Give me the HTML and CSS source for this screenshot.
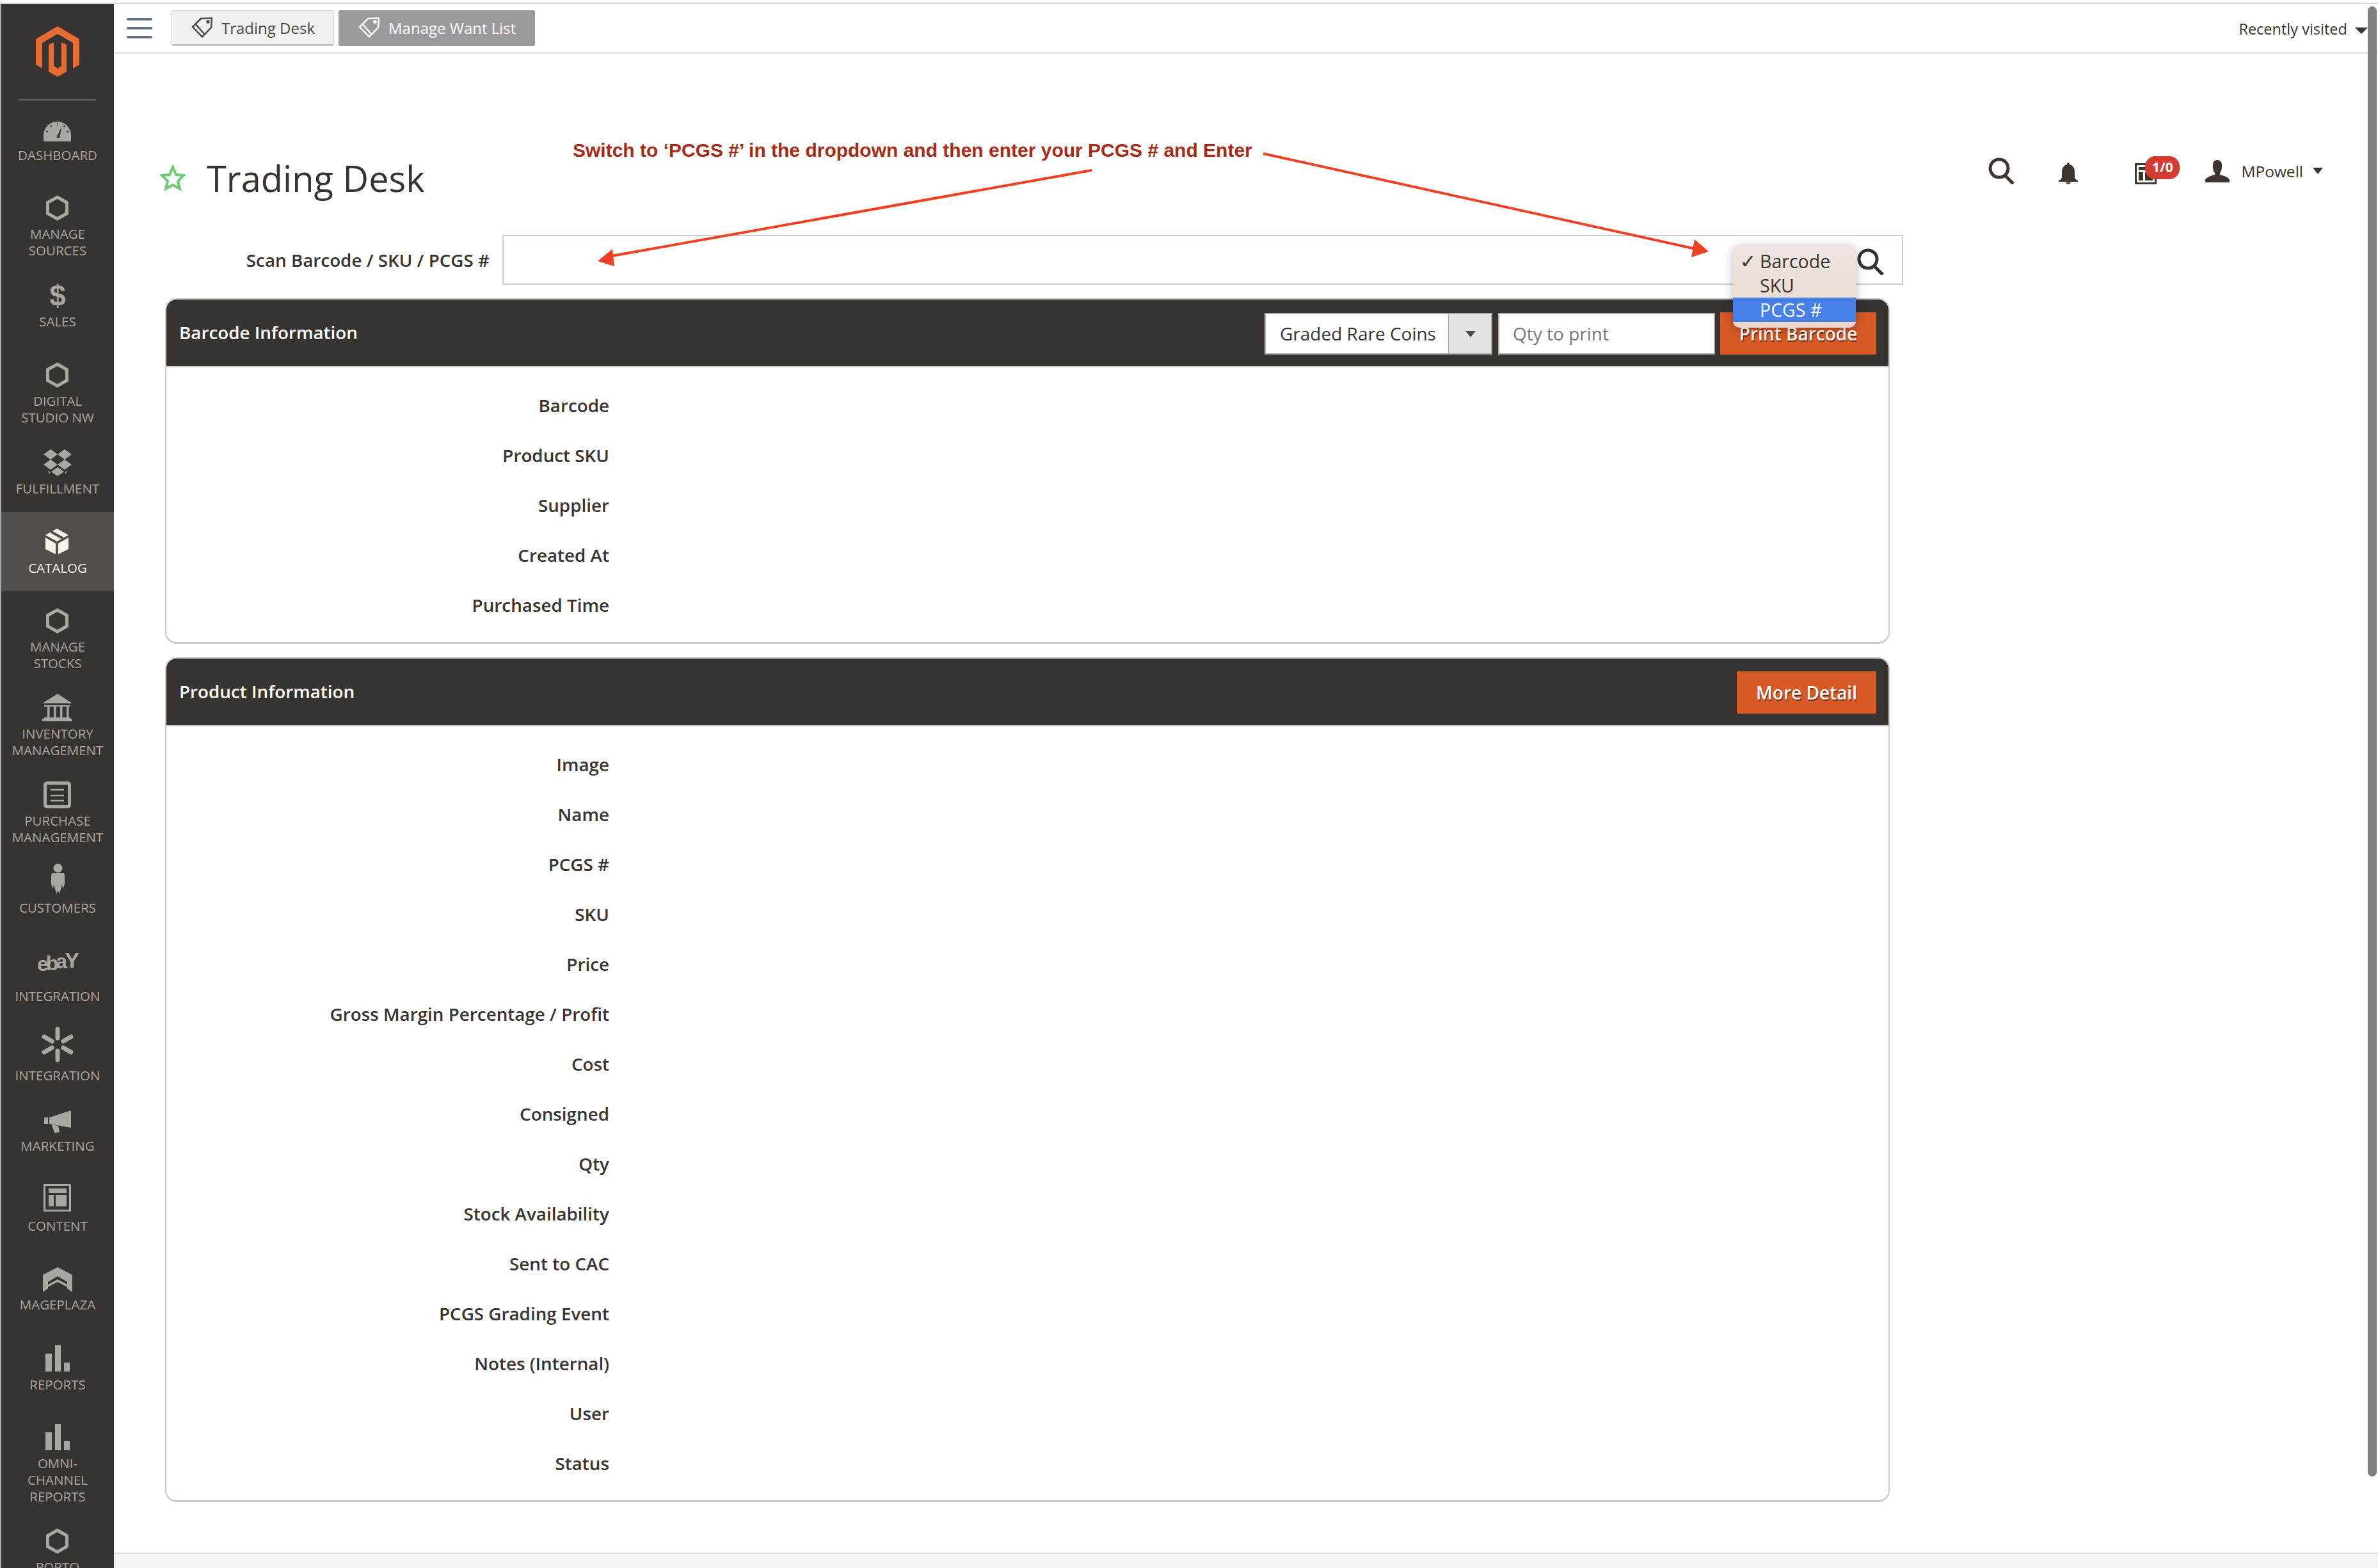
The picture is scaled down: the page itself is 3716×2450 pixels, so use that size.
FILE: index.html
```html
<!DOCTYPE html>
<html lang="en">
<head>
    <meta charset="UTF-8">
    <meta name="viewport" content="width=device-width, initial-scale=1.0">
    <title>Trading Desk</title>
    <link rel="stylesheet" href="styles.css">
</head>
<body>
    <div class="shell">
        <nav class="sidebar">
            <div class="logo-wrap">
                <svg class="logo" width="68" height="79" viewBox="0 0 68 79">
                    <path d="M34 0L68 20V60L58 66V26L34 12L10 26V66L0 60V20Z"/>
                    <path d="M34 79L20 71V29L28 25V62L34 66L40 62V25L48 29V71Z"/>
                </svg>
            </div>

            <a class="menu-item h122">
                <svg class="menu-icon" viewBox="0 0 70 60">
                    <path d="M13 58V48A21.5 21 0 0 1 56 48V58Z"/>
                    <path class="cut" d="M33 52L41 36L38 53Z"/>
                    <path class="cut-line" d="M35 30v3M24 33l1.500 2.500M46 33l-1.500 2.500M17 42l2.500 1M52 42l-2.500 1"/>
                </svg>
                <span class="menu-label">Dashboard</span>
            </a>
            <a class="menu-item h149">
                <svg class="menu-icon" viewBox="0 0 70 60"><polygon class="hex" points="34.500,22 49.500,30.500 49.500,47.500 34.500,56 19.500,47.500 19.500,30.500"/></svg>
                <span class="menu-label">Manage<br>Sources</span>
            </a>
            <a class="menu-item h111">
                <svg class="menu-icon" viewBox="0 0 70 60"><text class="icon-dollar" x="35" y="55">$</text></svg>
                <span class="menu-label">Sales</span>
            </a>
            <a class="menu-item h150">
                <svg class="menu-icon" viewBox="0 0 70 60"><polygon class="hex" points="34.500,22 49.500,30.500 49.500,47.500 34.500,56 19.500,47.500 19.500,30.500"/></svg>
                <span class="menu-label">Digital<br>Studio NW</span>
            </a>
            <a class="menu-item h111">
                <svg class="menu-icon" viewBox="0 0 70 60">
                    <path d="M24 18L35 26L24 34L13 26ZM46 18L57 26L46 34L35 26ZM24 34L35 42L24 50L13 42ZM46 34L57 42L46 50L35 42ZM35 46L45 53L35 60L25 53Z"/>
                    <path d="M19 51L24 54.500L22 56ZM51 51L46 54.500L48 56Z"/>
                </svg>
                <span class="menu-label">Fulfillment</span>
            </a>
            <a class="menu-item h124 active">
                <svg class="menu-icon" viewBox="0 0 70 60">
                    <path d="M34 18L52 28L34 38L16 28Z"/>
                    <path d="M16 32L32 41V58L16 50ZM36 41L52 32V50L36 58Z"/>
                    <path class="cut-line wide" d="M25 23L43 33"/>
                </svg>
                <span class="menu-label">Catalog</span>
            </a>
            <a class="menu-item h149">
                <svg class="menu-icon" viewBox="0 0 70 60"><polygon class="hex" points="34.500,22 49.500,30.500 49.500,47.500 34.500,56 19.500,47.500 19.500,30.500"/></svg>
                <span class="menu-label">Manage<br>Stocks</span>
            </a>
            <a class="menu-item h136">
                <svg class="menu-icon" viewBox="0 0 70 60">
                    <path d="M35 17L58 32H11Z"/>
                    <path d="M14 35H55V37H14ZM11 56H58V60H11ZM19 37h3.500V54H19ZM29 37h3.500V54H29ZM39 37h3.500V54H39ZM49 37h3.500V54H49ZM14 54H55V56H14Z"/>
                </svg>
                <span class="menu-label">Inventory<br>Management</span>
            </a>
            <a class="menu-item h136">
                <svg class="menu-icon" viewBox="0 0 70 60">
                    <rect class="hex" x="15.500" y="20.500" width="38" height="37" rx="3"/>
                    <path class="line" d="M24 31H45M24 40H45M24 48H45"/>
                </svg>
                <span class="menu-label">Purchase<br>Management</span>
            </a>
            <a class="menu-item h110">
                <svg class="menu-icon" viewBox="0 0 70 60">
                    <circle cx="35.500" cy="17.500" r="7"/>
                    <path d="M28 25H43Q46 25 46 30V43L43 50L42 42L38 58L35.500 52L33 58L29 42L28 50L25 43V30Q25 25 28 25Z"/>
                </svg>
                <span class="menu-label">Customers</span>
            </a>
            <a class="menu-item h138">
                <svg class="menu-icon" viewBox="0 0 70 60">
                    <text class="icon-ebay" x="3" y="40">e<tspan dy="-1">b</tspan><tspan dy="-3">a</tspan><tspan class="icon-ebay-y" dy="-1">Y</tspan></text>
                </svg>
                <span class="menu-label">Integration</span>
            </a>
            <a class="menu-item h124">
                <svg class="menu-icon" viewBox="0 0 70 60">
                    <path class="petal" d="M35 7V21M35 41V55M43.700 26L55.800 19M26.300 26L14.200 19M43.700 36L55.800 43M26.300 36L14.200 43"/>
                </svg>
                <span class="menu-label">Integration</span>
            </a>
            <a class="menu-item h110">
                <svg class="menu-icon" viewBox="0 0 70 60">
                    <path d="M14 35H20V45H14ZM22 35L56 24V51L22 45ZM26 46L36 48L38 58L30 59Z"/>
                </svg>
                <span class="menu-label">Marketing</span>
            </a>
            <a class="menu-item h125">
                <svg class="menu-icon" viewBox="0 0 70 60">
                    <rect class="hex thin" x="14.500" y="15.500" width="40" height="40"/>
                    <path d="M21 21H49V28H21ZM21 31H29V49H21ZM32 31H49V49H32Z"/>
                </svg>
                <span class="menu-label">Content</span>
            </a>
            <a class="menu-item h123">
                <svg class="menu-icon" viewBox="0 0 70 60">
                    <path d="M35 21L58 33V60L50 54V44L35 35L20 44V54L12 60V33Z"/>
                    <path d="M35 40L50 48V52L35 44L20 52V48Z"/>
                </svg>
                <span class="menu-label">Mageplaza</span>
            </a>
            <a class="menu-item h125">
                <svg class="menu-icon" viewBox="0 0 70 60"><path d="M16 31H26V59H16ZM31 18H40V59H31ZM45 45H54V59H45Z"/></svg>
                <span class="menu-label">Reports</span>
            </a>
            <a class="menu-item h175">
                <svg class="menu-icon" viewBox="0 0 70 60"><path d="M16 31H26V59H16ZM31 18H40V59H31ZM45 45H54V59H45Z"/></svg>
                <span class="menu-label">Omni-<br>Channel<br>Reports</span>
            </a>
            <a class="menu-item h110">
                <svg class="menu-icon" viewBox="0 0 70 60"><polygon class="hex" points="34.500,22 49.500,30.500 49.500,47.500 34.500,56 19.500,47.500 19.500,30.500"/></svg>
                <span class="menu-label">Porto</span>
            </a>
        </nav>

        <div class="main">
            <header class="topbar">
                <div class="hamburger"><span></span><span></span><span></span></div>
                <a class="tab">
                    <svg class="tag" width="33" height="32" viewBox="0 0 33 32">
                        <path d="M15 2L32 1.500L31 16L17 30.500L2 15ZM7 11L20 26"/>
                        <circle cx="26" cy="7" r="1.500"/>
                    </svg>
                    Trading Desk
                </a>
                <a class="tab tab-dark">
                    <svg class="tag" width="33" height="32" viewBox="0 0 33 32">
                        <path d="M15 2L32 1.500L31 16L17 30.500L2 15ZM7 11L20 26"/>
                        <circle cx="26" cy="7" r="1.500"/>
                    </svg>
                    Manage Want List
                </a>
                <div class="recent">Recently visited <span class="caret"></span></div>
            </header>

            <div class="content">
                <div class="page-head">
                    <svg class="star" width="40" height="40" viewBox="0 0 40 40">
                        <path d="M20 3L25 15L37 16L28 25L31 37L20 31L9 37L12 25L3 16L15 15Z"/>
                    </svg>
                    <h1>Trading Desk</h1>
                    <div class="actions">
                        <svg class="act-search" width="42" height="42" viewBox="0 0 42 42">
                            <circle cx="17" cy="17" r="14"/>
                            <path d="M26 28L39 41"/>
                        </svg>
                        <svg class="act-bell" width="30" height="34" viewBox="0 0 30 34">
                            <path d="M15 0Q17 0 17 3Q25 5 25 15V23Q26 27 30 28V30H0V28Q4 27 5 23V15Q5 5 13 3Q13 0 15 0Z"/>
                            <path d="M11 31H19Q18 34 15 34Q12 34 11 31Z"/>
                        </svg>
                        <div class="act-notify">
                            <svg width="34" height="33" viewBox="0 0 34 33">
                                <rect x="1.500" y="1.500" width="31" height="30"/>
                                <path class="fill" d="M6 6H28V11H6ZM6 14H13V27H6ZM16 14H28V27H16Z"/>
                            </svg>
                            <span class="badge">1/0</span>
                        </div>
                        <div class="act-user">
                            <svg width="38" height="35" viewBox="0 0 38 35">
                                <path d="M19 0Q27 0 26 11Q26 17 23 20V23Q36 26 38 31V35H0V31Q2 26 15 23V20Q12 17 12 11Q11 0 19 0Z"/>
                            </svg>
                            MPowell <span class="caret small"></span>
                        </div>
                    </div>
                </div>

                <div class="scan-row">
                    <label class="scan-label">Scan Barcode / SKU / PCGS #</label>
                    <div class="scan-box">
                        <svg class="scan-icon" width="44" height="42" viewBox="0 0 44 42">
                            <circle cx="18" cy="17" r="14"/>
                            <path d="M27 27L41 41"/>
                        </svg>
                        <ul class="scan-menu">
                            <li><span class="tick">✓</span>Barcode</li>
                            <li>SKU</li>
                            <li class="picked">PCGS #</li>
                        </ul>
                    </div>
                </div>

                <section class="panel">
                    <div class="panel-head">
                        <h2>Barcode Information</h2>
                        <div class="panel-tools">
                            <div class="fake-select">
                                <span class="fake-value">Graded Rare Coins</span>
                                <span class="fake-arrow"></span>
                            </div>
                            <div class="fake-input">Qty to print</div>
                            <button class="btn btn-print">Print Barcode</button>
                        </div>
                    </div>
                    <div class="panel-body">
                        <div class="info-row">Barcode</div>
                        <div class="info-row">Product SKU</div>
                        <div class="info-row">Supplier</div>
                        <div class="info-row">Created At</div>
                        <div class="info-row">Purchased Time</div>
                    </div>
                </section>

                <section class="panel">
                    <div class="panel-head">
                        <h2>Product Information</h2>
                        <div class="panel-tools">
                            <button class="btn btn-more">More Detail</button>
                        </div>
                    </div>
                    <div class="panel-body">
                        <div class="info-row">Image</div>
                        <div class="info-row">Name</div>
                        <div class="info-row">PCGS #</div>
                        <div class="info-row">SKU</div>
                        <div class="info-row">Price</div>
                        <div class="info-row">Gross Margin Percentage / Profit</div>
                        <div class="info-row">Cost</div>
                        <div class="info-row">Consigned</div>
                        <div class="info-row">Qty</div>
                        <div class="info-row">Stock Availability</div>
                        <div class="info-row">Sent to CAC</div>
                        <div class="info-row">PCGS Grading Event</div>
                        <div class="info-row">Notes (Internal)</div>
                        <div class="info-row">User</div>
                        <div class="info-row">Status</div>
                    </div>
                </section>
            </div>

            <footer class="footer"></footer>
        </div>
    </div>

    <!-- callout pasted over the page -->
    <div class="note">Switch to ‘PCGS #’ in the dropdown and then enter your PCGS # and Enter</div>
    <svg class="arrows" width="3716" height="2450" viewBox="0 0 3716 2450">
        <path class="arrow-line" d="M1706 266L950 401M1974 240L2650 389"/>
        <path class="arrow-head" d="M934 408L957 389L960 416ZM2670 393L2643 402L2648 374Z"/>
    </svg>
    <div class="scrollbar"></div>
</body>
</html>
```

FILE: styles.css
```css
* {
    box-sizing: border-box;
}
html, body {
    height: 100%;
}
body {
    margin: 0;
    padding-top: 4px;
    font-family: "Open Sans", Arial, sans-serif;
    color: #373330;
    background-color: #ffffff;
    overflow: hidden;
}
.shell {
    display: flex;
    height: 2446px;
    border-top: 2px solid #dcdce2;
}

/* sidebar */
.sidebar {
    width: 178px;
    flex-shrink: 0;
    height: 2444px;
    overflow: hidden;
    background-color: #373330;
    border-left: 2px solid #a8a8a8;
}
.logo-wrap {
    display: flex;
    justify-content: center;
    align-items: center;
    height: 151px;
    margin: 0 28px 0 28px;
    border-bottom: 2px solid #6b6560;
}
.logo {
    fill: #e56d33;
}
.menu-item {
    display: flex;
    flex-direction: column;
    align-items: center;
    justify-content: flex-end;
    padding-bottom: 24px;
    color: #aaa6a0;
    fill: #aaa6a0;
}
.menu-item.active {
    background-color: #524d49;
    color: #f7f3eb;
    fill: #f7f3eb;
}
.h110 { height: 110px; }
.h111 { height: 111px; }
.h122 { height: 122px; }
.h123 { height: 123px; }
.h124 { height: 124px; }
.h125 { height: 125px; }
.h136 { height: 136px; }
.h138 { height: 138px; }
.h149 { height: 149px; }
.h150 { height: 150px; }
.h175 { height: 175px; }
.menu-icon {
    width: 70px;
    height: 60px;
    margin-bottom: 6px;
    flex-shrink: 0;
    overflow: visible;
}
.menu-label {
    font-size: 20.500px;
    line-height: 26px;
    text-align: center;
    text-transform: uppercase;
    white-space: nowrap;
}
.hex {
    fill: none;
    stroke: #aaa6a0;
    stroke-width: 5;
}
.hex.thin {
    stroke-width: 3;
}
.cut {
    fill: #373330;
}
.cut-line {
    fill: none;
    stroke: #373330;
    stroke-width: 2;
}
.cut-line.wide {
    stroke: #524d49;
    stroke-width: 4;
}
.line {
    fill: none;
    stroke: #aaa6a0;
    stroke-width: 2.500;
}
.petal {
    fill: none;
    stroke: #aaa6a0;
    stroke-width: 7;
    stroke-linecap: round;
}
.icon-dollar {
    font-family: "Liberation Sans", Arial, sans-serif;
    font-weight: bold;
    font-size: 46px;
    text-anchor: middle;
}
.icon-ebay {
    font-family: "Liberation Sans", Arial, sans-serif;
    font-weight: bold;
    font-size: 32px;
    letter-spacing: -4px;
}
.icon-ebay-y {
    font-size: 34px;
}

/* top bar */
.main {
    flex: 1;
    display: flex;
    flex-direction: column;
    min-width: 0;
}
.topbar {
    display: flex;
    align-items: center;
    height: 78px;
    padding: 0 16px 0 20px;
    border-bottom: 2px solid #dcdce2;
}
.hamburger {
    display: flex;
    flex-direction: column;
    gap: 10px;
    width: 40px;
    margin-right: 30px;
}
.hamburger span {
    height: 4px;
    border-radius: 2px;
    background-color: #5f7080;
}
.tab {
    display: flex;
    align-items: center;
    gap: 14px;
    height: 56px;
    padding: 0 29px 0 30px;
    margin-right: 7px;
    font-size: 24px;
    color: #4c4843;
    background-color: #f0f0f0;
    border: 1px solid #d4d4d4;
    border-bottom: 3px solid #c8c8c8;
    border-radius: 3px;
}
.tab-dark {
    color: #ffffff;
    background-color: #9a9a9e;
    border-color: #9a9a9e;
}
.tag {
    fill: none;
    stroke: currentColor;
    stroke-width: 2.500;
}
.recent {
    margin-left: auto;
    padding-top: 2px;
    font-size: 23.500px;
    white-space: nowrap;
}
.caret {
    display: inline-block;
    margin-left: 6px;
    vertical-align: middle;
    border-top: 10px solid #373330;
    border-left: 10px solid transparent;
    border-right: 10px solid transparent;
}
.caret.small {
    border-top-width: 10px;
    border-left-width: 8px;
    border-right-width: 8px;
    margin-left: -3px;
}

/* page */
.content {
    flex: 1;
    padding-left: 80px;
}
.page-head {
    display: flex;
    align-items: center;
    height: 283px;
    padding: 149px 86px 44px 0;
}
.star {
    margin: 0 33px 0 -8px;
    fill: none;
    stroke: #6ecb70;
    stroke-width: 4;
}
h1 {
    margin: 0;
    font-size: 56px;
    line-height: 90px;
    font-weight: 400;
    color: #373330;
}
.actions {
    display: flex;
    align-items: center;
    margin-left: auto;
    margin-bottom: 22px;
}
.act-search {
    fill: none;
    stroke: #3f3530;
    stroke-width: 5;
    margin-right: 68px;
}
.act-bell {
    fill: #3f3530;
    margin-top: 8px;
    margin-right: 89px;
}
.act-notify {
    position: relative;
    width: 34px;
    height: 33px;
    margin-top: 8px;
    margin-right: 76px;
}
.act-notify svg {
    fill: none;
    stroke: #3f3530;
    stroke-width: 3;
}
.act-notify .fill {
    fill: #3f3530;
    stroke: none;
}
.badge {
    position: absolute;
    left: 16px;
    top: -11px;
    width: 54px;
    height: 36px;
    line-height: 34px;
    border-radius: 16px;
    text-align: center;
    font-size: 21px;
    font-weight: 700;
    color: #ffffff;
    background-color: #d13b30;
}
.act-user {
    display: flex;
    align-items: center;
    gap: 18px;
    font-size: 24.500px;
    white-space: nowrap;
}
.act-user svg {
    fill: #3f3530;
}
.scan-row {
    display: flex;
    width: 2716px;
    height: 78px;
    margin-bottom: 21px;
}
.scan-label {
    width: 507px;
    margin-right: 20px;
    font-size: 27.800px;
    font-weight: 600;
    line-height: 78px;
    text-align: right;
}
.scan-box {
    position: relative;
    flex: 1;
    border: 2px solid #cccccc;
}
.scan-icon {
    position: absolute;
    right: 27px;
    top: 19px;
    fill: none;
    stroke: #373330;
    stroke-width: 5;
}
.scan-menu {
    position: absolute;
    left: 1921px;
    top: 13px;
    width: 192px;
    height: 130px;
    margin: 0;
    padding: 7px 0 0;
    list-style: none;
    font-size: 28.500px;
    border-radius: 10px;
    background: linear-gradient(#ece5e1, #ecd8cd);
    box-shadow: 0 4px 16px rgba(0, 0, 0, 0.28);
}
.scan-menu li {
    position: relative;
    height: 38px;
    line-height: 38px;
    padding-left: 42px;
}
.scan-menu .picked {
    color: #ffffff;
    background-color: #4680e8;
}
.tick {
    position: absolute;
    left: 11px;
    font-size: 30px;
}

/* panels */
.panel {
    width: 2695px;
    margin-bottom: 21px;
    border: 2px solid #cccccc;
    border-bottom-width: 3px;
    border-radius: 18px;
    overflow: hidden;
}
.panel-head {
    display: flex;
    align-items: center;
    height: 106px;
    padding: 0 19px 0 20px;
    background-color: #373330;
    border-bottom: 2px solid #cccccc;
}
h2 {
    margin: 0 0 2px;
    font-size: 27.800px;
    font-weight: 600;
    color: #ffffff;
}
.panel-tools {
    display: flex;
    align-items: center;
    margin-left: auto;
    margin-top: 2px;
}
.fake-select {
    display: flex;
    width: 356px;
    height: 65px;
    margin-right: 9px;
    background-color: #ffffff;
    border: 2px solid #adadad;
}
.fake-value {
    flex: 1;
    padding-left: 22px;
    font-size: 28px;
    line-height: 61px;
    white-space: nowrap;
}
.fake-arrow {
    position: relative;
    width: 67px;
    background-color: #e3e3e3;
    border-left: 1px solid #adadad;
}
.fake-arrow::after {
    content: "";
    position: absolute;
    left: 26px;
    top: 26px;
    border-top: 10px solid #514943;
    border-left: 8px solid transparent;
    border-right: 8px solid transparent;
}
.fake-input {
    width: 339px;
    height: 65px;
    margin-right: 8px;
    padding-left: 21px;
    font-size: 28px;
    line-height: 61px;
    color: #777777;
    background-color: #ffffff;
    border: 2px solid #adadad;
}
.btn {
    height: 66px;
    border: none;
    font-family: "Open Sans", Arial, sans-serif;
    font-size: 28px;
    font-weight: 600;
    color: #ffffff;
    background-color: #d85a27;
    text-shadow: 1px 2px 1px #6b2c10;
}
.btn-print {
    width: 244px;
}
.btn-more {
    width: 218px;
}
.panel-body {
    padding: 20px 0 19px;
}
.info-row {
    width: 692px;
    height: 78px;
    font-size: 27.800px;
    font-weight: 600;
    line-height: 78px;
    text-align: right;
}
.footer {
    height: 24px;
    background-color: #f4f4f4;
    border-top: 2px solid #dddddd;
}

/* overlays */
.note {
    position: absolute;
    left: 895px;
    top: 218px;
    font-family: "Liberation Sans", Arial, sans-serif;
    font-size: 30px;
    font-weight: bold;
    line-height: 34px;
    color: #a62a16;
    white-space: nowrap;
}
.arrows {
    position: absolute;
    left: 0;
    top: 0;
    pointer-events: none;
}
.arrow-line {
    fill: none;
    stroke: #ee4023;
    stroke-width: 4;
}
.arrow-head {
    fill: #ee4023;
}
.scrollbar {
    position: absolute;
    left: 3700px;
    top: 10px;
    width: 14px;
    height: 2297px;
    border-radius: 7px;
    background-color: #808080;
}
```
